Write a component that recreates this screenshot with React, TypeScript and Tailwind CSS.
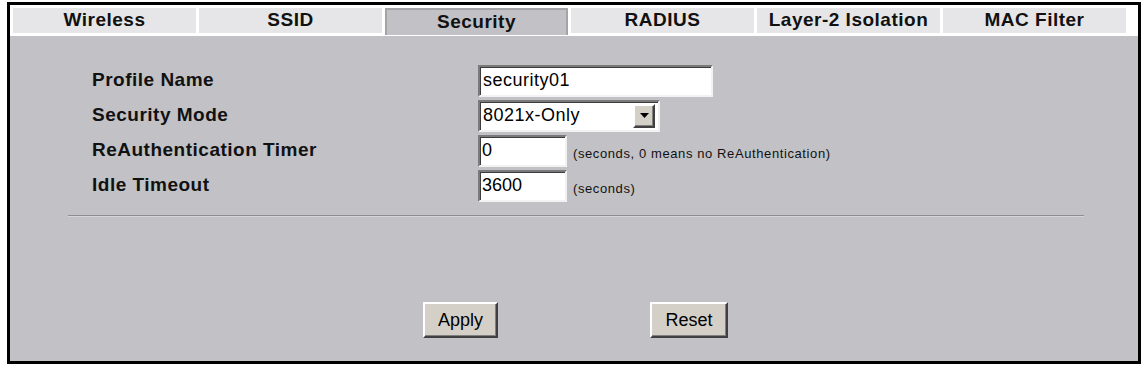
import React from 'react';

const tabs = ['Wireless', 'SSID', 'Security', 'RADIUS', 'Layer-2 Isolation', 'MAC Filter'];

const inset =
  'bg-white border-2 border-t-[#7a7a7a] border-l-[#7a7a7a] border-b-[#f2f2f2] border-r-[#f2f2f2] shadow-[inset_1px_1px_0_#3c3c3c]';

const outset =
  'bg-[#d4d0c8] border-2 border-t-[#ffffff] border-l-[#ffffff] border-b-[#404040] border-r-[#404040] shadow-[inset_-1px_-1px_0_#808080]';

function Row({ label, children }: { label: string; children: React.ReactNode }) {
  return (
    <div className="flex items-center h-[35px]">
      <div className="w-[468px] pl-[82px] font-bold text-[19px] tracking-[0.5px] text-[#111]">{label}</div>
      <div className="flex items-center">{children}</div>
    </div>
  );
}

export default function App() {
  return (
    <div className="w-[1145px] h-[370px] bg-white pt-[2px] pl-[7px]" style={{ fontFamily: '"Liberation Sans", Arial, sans-serif' }}>
      <div className="w-[1134px] h-[362px] border-[3px] border-black flex flex-col">
        {/* tab bar */}
        <div className="h-[31px] bg-white flex gap-[3px] pl-[3px] pt-[3px]">
          {tabs.map((t) => {
            const active = t === 'Security';
            return (
              <div
                key={t}
                className={
                  'w-[183px] flex items-center justify-center font-bold text-[19px] tracking-[0.5px] text-[#111] ' +
                  (active
                    ? 'h-[27px] bg-[#c2c1c5] border-2 border-[#a4a4a6] border-b-0'
                    : 'h-[25px] bg-[#e6e6e8]')
                }
              >
                {t}
              </div>
            );
          })}
        </div>

        {/* content */}
        <div className="flex-1 bg-[#c2c1c5] pt-[27px] flex flex-col">
          <Row label="Profile Name">
            <div className={inset + ' w-[235px] h-[32px] flex items-center pl-[3px] text-[18px] tracking-[0.5px] text-black'}>
              security01
            </div>
          </Row>
          <Row label="Security Mode">
            <div className={inset + ' w-[182px] h-[32px] flex items-center justify-between pl-[3px] pr-[3px] text-[18px] tracking-[0.5px] text-black'}>
              <span>8021x-Only</span>
              <div className={outset + ' w-[22px] h-[24px] flex items-center justify-center'}>
                <svg width="9" height="5" viewBox="0 0 9 5">
                  <path d="M0 0 H9 L4.5 5 Z" fill="#000" />
                </svg>
              </div>
            </div>
          </Row>
          <Row label="ReAuthentication Timer">
            <div className={inset + ' w-[89px] h-[32px] flex items-center pl-[2px] text-[18px] text-black'}>0</div>
            <span className="ml-[6px] mt-[6px] text-[13px] tracking-[0.6px] text-[#111]">
              (seconds, 0 means no ReAuthentication)
            </span>
          </Row>
          <Row label="Idle Timeout">
            <div className={inset + ' w-[89px] h-[32px] flex items-center pl-[2px] text-[18px] text-black'}>3600</div>
            <span className="ml-[6px] mt-[6px] text-[13px] tracking-[0.6px] text-[#111]">(seconds)</span>
          </Row>

          <div className="ml-[58px] mt-[12px] w-[1016px] h-[2px] border-t border-t-[#8e8e90] border-b border-b-[#d6d6d8]" />

          <div className="flex mt-[85px] pl-[413px]">
            <button className={outset + ' w-[75px] h-[36px] text-[18px] text-black'}>Apply</button>
            <button className={outset + ' ml-[152px] w-[78px] h-[36px] text-[18px] text-black'}>Reset</button>
          </div>
        </div>
      </div>
    </div>
  );
}
